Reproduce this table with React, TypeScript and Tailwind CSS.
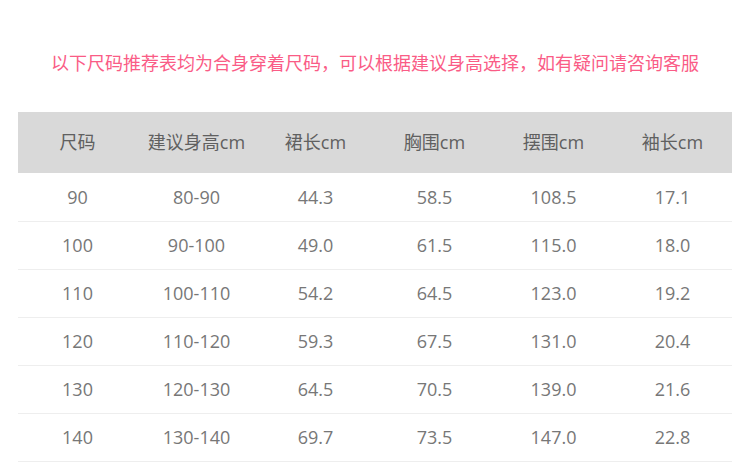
const headers = ["尺码", "建议身高cm", "裙长cm", "胸围cm", "摆围cm", "袖长cm"];

const rows = [
  ["90", "80-90", "44.3", "58.5", "108.5", "17.1"],
  ["100", "90-100", "49.0", "61.5", "115.0", "18.0"],
  ["110", "100-110", "54.2", "64.5", "123.0", "19.2"],
  ["120", "110-120", "59.3", "67.5", "131.0", "20.4"],
  ["130", "120-130", "64.5", "70.5", "139.0", "21.6"],
  ["140", "130-140", "69.7", "73.5", "147.0", "22.8"],
];

export default function App() {
  return (
    <div className="w-[750px] h-[462px] overflow-hidden bg-white px-[18px] font-['Open_Sans','Noto_Sans_CJK_SC',sans-serif]">
      <p className="pt-[50px] mb-[36px] text-center text-[18px] leading-[26px] text-[#fa5c86]">
        以下尺码推荐表均为合身穿着尺码，可以根据建议身高选择，如有疑问请咨询客服
      </p>

      <div className="grid grid-cols-6 h-[61px] mb-px bg-[#d9d9d9] text-[18px] text-[#606060]">
        {headers.map((h) => (
          <div key={h} className="flex items-center justify-center">
            {h}
          </div>
        ))}
      </div>

      {rows.map((row) => (
        <div
          key={row[0]}
          className="grid grid-cols-6 h-[48px] border-b border-[#eeeeee] text-[18px] text-[#777777]"
        >
          {row.map((cell, i) => (
            <div key={i} className="flex items-center justify-center">
              {cell}
            </div>
          ))}
        </div>
      ))}
    </div>
  );
}
